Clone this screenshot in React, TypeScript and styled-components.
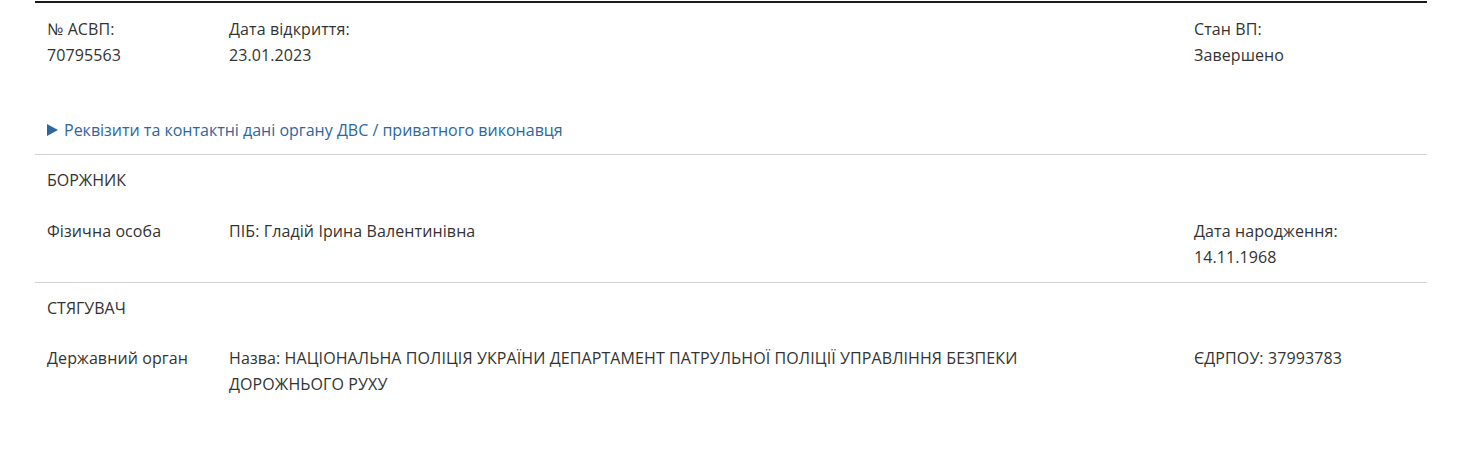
import React from "react";
import styled, { createGlobalStyle } from "styled-components";

const Global = createGlobalStyle`
  body {
    margin: 0;
    background: #ffffff;
    font-family: "Open Sans", "Noto Sans", sans-serif;
    color: #333333;
  }
`;

const Card = styled.section`
  width: 1392px;
  margin-left: 35px;
  padding-top: 1px;
`;

const Block = styled.div<{ $top?: boolean }>`
  border-top: ${(p) => (p.$top ? "2px solid #1a1a1a" : "1px solid #d2d2d2")};
  padding: 0 12px;
`;

const Grid = styled.div<{ $pt: number; $pb: number }>`
  display: grid;
  grid-template-columns: 182px 1fr 221px;
  padding-top: ${(p) => p.$pt}px;
  padding-bottom: ${(p) => p.$pb}px;
`;

const Cell = styled.div<{ $wide?: boolean }>`
  font-size: 16px;
  line-height: 26px;
  color: #333333;
  letter-spacing: 0.1px;
  padding-right: ${(p) => (p.$wide ? "85px" : "0")};
`;

const Heading = styled.div`
  font-size: 16px;
  line-height: 26px;
  color: #333333;
  text-transform: uppercase;
  padding-top: 12px;
`;

const Details = styled.details`
  padding: 49px 0 11px;
`;

const Summary = styled.summary`
  list-style: none;
  display: flex;
  align-items: center;
  gap: 6px;
  font-size: 16px;
  line-height: 26px;
  color: #2c67a0;
  cursor: pointer;
  &::-webkit-details-marker {
    display: none;
  }
`;

const Arrow = styled.svg`
  width: 11px;
  height: 12px;
  flex: none;
`;

export default function App() {
  return (
    <>
      <Global />
      <Card>
        <Block $top>
          <Grid $pt={13} $pb={0}>
            <Cell>
              № АСВП:
              <br />
              70795563
            </Cell>
            <Cell $wide>
              Дата відкриття:
              <br />
              23.01.2023
            </Cell>
            <Cell>
              Стан ВП:
              <br />
              Завершено
            </Cell>
          </Grid>
          <Details>
            <Summary>
              <Arrow viewBox="0 0 11 12">
                <path d="M0 0 L11 6 L0 12 Z" fill="#2c67a0" />
              </Arrow>
              Реквізити та контактні дані органу ДВС / приватного виконавця
            </Summary>
          </Details>
        </Block>
        <Block>
          <Heading>Боржник</Heading>
          <Grid $pt={25} $pb={12}>
            <Cell>Фізична особа</Cell>
            <Cell $wide>ПІБ: Гладій Ірина Валентинівна</Cell>
            <Cell>
              Дата народження:
              <br />
              14.11.1968
            </Cell>
          </Grid>
        </Block>
        <Block>
          <Heading>Стягувач</Heading>
          <Grid $pt={24} $pb={40}>
            <Cell>Державний орган</Cell>
            <Cell $wide>
              Назва: НАЦІОНАЛЬНА ПОЛІЦІЯ УКРАЇНИ ДЕПАРТАМЕНТ ПАТРУЛЬНОЇ ПОЛІЦІЇ
              УПРАВЛІННЯ БЕЗПЕКИ ДОРОЖНЬОГО РУХУ
            </Cell>
            <Cell>ЄДРПОУ: 37993783</Cell>
          </Grid>
        </Block>
      </Card>
    </>
  );
}
